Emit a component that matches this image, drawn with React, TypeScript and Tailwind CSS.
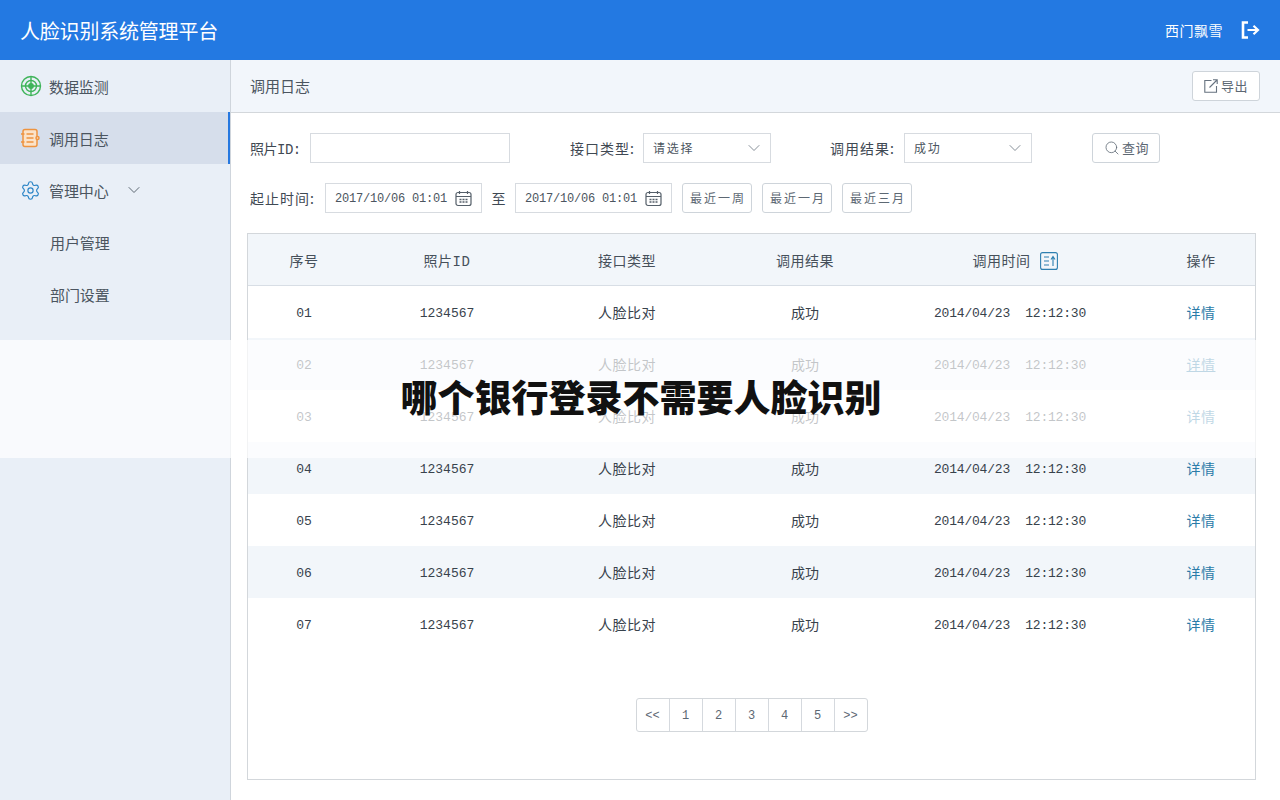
import { ChevronDown, Search, Settings } from "lucide-react";

const cjk = "font-['Noto_Sans_CJK_SC',sans-serif]";
const mono = "font-['Liberation_Mono','Noto_Sans_CJK_SC',monospace]";
const rows = ["01", "02", "03", "04", "05", "06", "07"];
const cols = "grid grid-cols-[112px_174px_186px_170px_257px_108px] items-center text-center";

function RadarIcon() {
  return (
    <svg width="22" height="22" viewBox="0 0 22 22" fill="none" stroke="#3fb45a" strokeWidth="1.4">
      <circle cx="11" cy="11" r="9.5" />
      <circle cx="11" cy="11" r="5.5" />
      <circle cx="11" cy="11" r="2.2" fill="#3fb45a" />
      <path d="M1.5 11h19M11 1.5v19" />
    </svg>
  );
}

function NotebookIcon() {
  return (
    <svg width="20" height="20" viewBox="0 0 20 20" fill="none" stroke="#ee9440" strokeWidth="1.5">
      <rect x="3" y="1.5" width="14" height="17" rx="2" fill="#fbe3c9" />
      <path d="M6.5 6h7M6.5 10h7M6.5 14h7M1 6h3.5M1 14h3.5" />
      <circle cx="17.5" cy="10" r="1.5" fill="#fbe3c9" />
    </svg>
  );
}

function LogoutIcon() {
  return (
    <svg width="20" height="18" viewBox="0 0 20 18" fill="none" stroke="#fff">
      <path d="M7 1.500H2v15h5" strokeWidth="2.600" />
      <path d="M6.500 9h10M12.500 4.800 17 9l-4.500 4.200" strokeWidth="2.200" />
    </svg>
  );
}

function ExportIcon() {
  return (
    <svg width="14" height="14" viewBox="0 0 14 14" fill="none" stroke="#66727f" strokeWidth="1.100">
      <path d="M7.500 1.500H.8v11.700h11.700V7" />
      <path d="M5.500 8.500 13 1M9 .8h4.200V5" />
    </svg>
  );
}

function CalendarIcon() {
  return (
    <svg width="17" height="17" viewBox="0 0 17 17" fill="none" stroke="#555f69" strokeWidth="1.200">
      <rect x="1" y="2.500" width="15" height="13" rx="2" />
      <path d="M1 6.500h15M4.500 1v3M12.500 1v3" />
      <path d="M4.500 9.500h8M4.500 12h8" strokeWidth="1.500" strokeDasharray="2 1" />
    </svg>
  );
}

function SortIcon() {
  return (
    <svg width="18" height="18" viewBox="0 0 18 18" fill="none" stroke="#2d7fb0" strokeWidth="1.100">
      <rect x=".6" y=".6" width="16.800" height="16.800" rx="2" />
      <path d="M4 5h5M4 9h5M4 13h5" />
      <path d="M13 14V5M11 7.500 13 4.500l2 3" />
    </svg>
  );
}

function Arrow() {
  return <ChevronDown className="w-[20px] h-[20px] text-[#6f7984]" strokeWidth={1} />;
}

function NavItem({ label, icon, active, sub }: { label: string; icon?: React.ReactNode; active?: boolean; sub?: boolean }) {
  return (
    <div
      className={`h-[52px] flex items-center text-[15px] tracking-[-0.100px] text-[#4b5560] ${
        active ? "bg-[#d6deeb] border-r-2 border-[#2678e0]" : ""
      } ${sub ? "pl-[50px]" : "pl-5"}`}
    >
      {icon && <span className="w-[29px] flex items-center">{icon}</span>}
      <span className="pt-[2px]">{label}</span>
      {label === "管理中心" && (
        <ChevronDown className="w-[20px] h-[20px] ml-[15px] text-[#5d6873]" strokeWidth={1.200} />
      )}
    </div>
  );
}

function OutlineButton({ children, className }: { children: React.ReactNode; className?: string }) {
  return (
    <div
      className={`h-[30px] flex items-center justify-center bg-white border border-[#ced4da] rounded-[3px] text-[#5d6873] ${className ?? ""}`}
    >
      {children}
    </div>
  );
}

function SelectBox({ value }: { value: string }) {
  return (
    <div className="w-[128px] h-[30px] border border-[#d7dbe0] flex items-center justify-between pl-[9px] pr-[6px] text-[12px] tracking-[1.800px] text-[#4b5560]">
      <span>{value}</span>
      <Arrow />
    </div>
  );
}

function DateBox({ value }: { value: string }) {
  return (
    <div className={`w-[157px] h-[30px] border border-[#d7dbe0] flex items-center justify-between pl-[9px] pr-[9px] text-[12px] text-[#4b5560] tracking-[-0.200px] ${mono}`}>
      <span className="pt-[2px]">{value}</span>
      <CalendarIcon />
    </div>
  );
}

function TableRow({ no, striped }: { no: string; striped: boolean }) {
  return (
    <div className={`${cols} h-[52px] text-[#38424c] ${striped ? "bg-[#f2f6fa]" : "bg-white"}`}>
      <span className={`text-[13px] pt-[4px] ${mono}`}>{no}</span>
      <span className={`text-[13px] pt-[4px] ${mono}`}>1234567</span>
      <span className="text-[14px] tracking-[0.500px]">人脸比对</span>
      <span className="text-[14px]">成功</span>
      <span className={`text-[13px] tracking-[-0.200px] pt-[4px] pr-[17px] whitespace-pre ${mono}`}>2014/04/23  12:12:30</span>
      <span className={`text-[14px] tracking-[0.500px] ${no === "02" ? "underline" : ""} text-[#2a7ba8]`}>详情</span>
    </div>
  );
}

export default function App() {
  return (
    <div className={`relative w-[1280px] h-[800px] overflow-hidden bg-white ${cjk}`}>
      <header className="h-[60px] bg-[#2379e2] flex items-center justify-between pl-5 pr-[19px] text-white">
        <h1 className="text-[20px] font-normal tracking-[-0.200px] pt-[1px]">人脸识别系统管理平台</h1>
        <div className="flex items-center gap-[18px]">
          <span className="text-[14px] tracking-[0.500px]">西门飘雪</span>
          <LogoutIcon />
        </div>
      </header>

      <div className="flex h-[740px]">
        <aside className="w-[231px] bg-[#e9eff7] border-r border-[#cfd5dc]">
          <NavItem label="数据监测" icon={<RadarIcon />} />
          <NavItem label="调用日志" icon={<NotebookIcon />} active />
          <NavItem label="管理中心" icon={<Settings className="w-[21px] h-[21px] text-[#2a84c6]" strokeWidth={1.300} />} />
          <NavItem label="用户管理" sub />
          <NavItem label="部门设置" sub />
        </aside>

        <main className="flex-1 flex flex-col">
          <div className="h-[53px] bg-[#f2f6fb] border-b border-[#d3d7db] flex items-center justify-between pl-5 pr-5 text-[15px] text-[#4b5560]">
            <span className="-ml-[1px]">调用日志</span>
            <OutlineButton className="w-[68px] gap-[3px] text-[13px] tracking-[0.500px]">
              <ExportIcon />
              <span>导出</span>
            </OutlineButton>
          </div>

          <div className="pl-[19px] pt-5 text-[14px] text-[#3f4953]">
            <div className="flex items-center h-[30px]">
              <span className={`w-[60px] pt-[4px] ${mono} tracking-[-0.500px]`}>照片ID:</span>
              <div className="w-[200px] h-[30px] border border-[#d7dbe0]" />
              <span className="ml-[60px] w-[73px] tracking-[1px]">接口类型:</span>
              <SelectBox value="请选择" />
              <span className="ml-[59px] w-[74px] tracking-[1px]">调用结果:</span>
              <SelectBox value="成功" />
              <OutlineButton className="ml-[60px] w-[68px] gap-[2px] pl-[1px] text-[13px] tracking-[0.500px]">
                <Search className="w-[16px] h-[16px]" strokeWidth={1.200} />
                <span>查询</span>
              </OutlineButton>
            </div>

            <div className="flex items-center h-[30px] mt-5">
              <span className="w-[75px] tracking-[1px]">起止时间:</span>
              <DateBox value="2017/10/06 01:01" />
              <span className="w-[33px] text-center">至</span>
              <DateBox value="2017/10/06 01:01" />
              {["最近一周", "最近一月", "最近三月"].map((label) => (
                <OutlineButton key={label} className="ml-[10px] w-[70px] pl-[2px] text-[12px] tracking-[2px]">
                  {label}
                </OutlineButton>
              ))}
            </div>
          </div>

          <div className="ml-4 mt-5 w-[1009px] h-[547px] border border-[#d3d7db]">
            <div className={`${cols} h-[52px] pt-[2px] bg-[#f2f6fa] border-b border-[#d8dee5] text-[14px] tracking-[0.500px] text-[#46505a]`}>
              <span>序号</span>
              <span className={`pt-[4px] ${mono}`}>照片ID</span>
              <span>接口类型</span>
              <span>调用结果</span>
              <span className="flex items-center justify-center gap-[9px] pr-[7px]">
                调用时间
                <SortIcon />
              </span>
              <span>操作</span>
            </div>
            {rows.map((no, i) => (
              <TableRow key={no} no={no} striped={i % 2 === 1} />
            ))}
            <div className="flex justify-center mt-[48px]">
              <div className={`flex h-[34px] border border-[#d3d7db] rounded-[3px] divide-x divide-[#d5d9de] text-[12px] text-[#5d6873] ${mono}`}>
                {["<<", "1", "2", "3", "4", "5", ">>"].map((p, i) => (
                  <span key={p} className={`${i === 6 ? "w-[32px]" : "w-[33px]"} pt-[2px] flex items-center justify-center`}>
                    {p}
                  </span>
                ))}
              </div>
            </div>
          </div>
        </main>
      </div>

      {/* watermark band over the page */}
      <div className="absolute left-0 top-[340px] w-[1280px] h-[118px] bg-white/70 flex items-center justify-center">
        <span className="text-[37px] font-black text-[#111111] leading-none ml-[2px] pb-[6px]">哪个银行登录不需要人脸识别</span>
      </div>
    </div>
  );
}
